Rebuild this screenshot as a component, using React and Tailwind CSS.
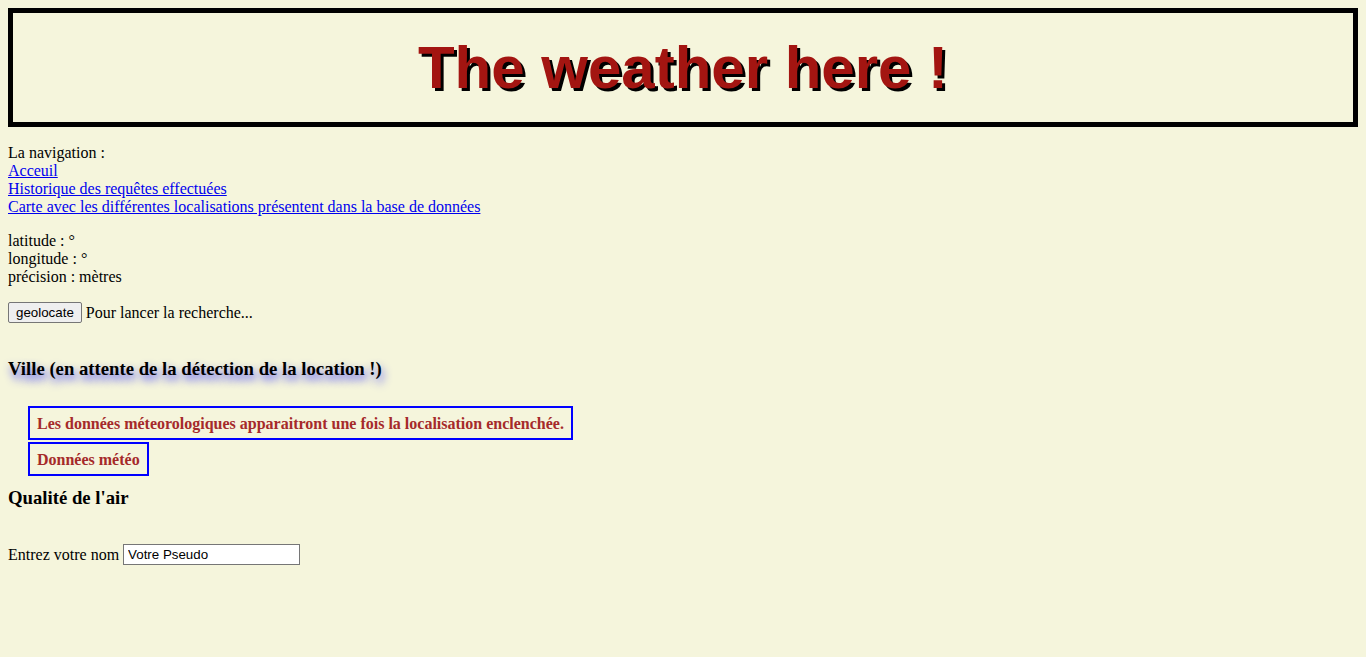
const NAV_LINKS = [
  'Acceuil',
  'Historique des requêtes effectuées',
  'Carte avec les différentes localisations présentent dans la base de données',
]

export default function App() {
  return (
    <div className="min-h-screen bg-[#f5f5dc] p-2 font-['Liberation_Serif',serif] text-[16px] leading-[18px] text-black">
      {/* Title */}
      <h1 className="border-[5px] border-black py-5 text-center font-['Liberation_Sans',Arial,sans-serif] text-[60px] font-bold leading-[69px] text-[#a31511] [text-shadow:3px_3px_0_#000]">
        The weather here !
      </h1>

      {/* Navigation */}
      <div className="mt-[17px] flex flex-col">
        <span>La navigation :</span>
        {NAV_LINKS.map((label) => (
          <a key={label} href="#" className="w-fit text-[#0000ee] underline">
            {label}
          </a>
        ))}
      </div>

      {/* Coordinates */}
      <div className="mt-4 flex flex-col">
        <span>latitude : °</span>
        <span>longitude : °</span>
        <span>précision : mètres</span>
      </div>

      <div className="mt-4 flex items-center gap-[4px]">
        <button className="h-[21px] rounded-[2px] border border-[#767676] bg-[#efefef] px-[7px] font-['Liberation_Sans',Arial,sans-serif] text-[13.33px] leading-[17px]">
          geolocate
        </button>
        <span>Pour lancer la recherche...</span>
      </div>

      <h3 className="mt-[35px] text-[18.72px] font-bold leading-[22px] [text-shadow:2px_5px_9px_rgba(40,40,255,0.8)]">
        Ville (en attente de la détection de la location !)
      </h3>

      {/* Weather boxes */}
      <div className="ml-5 mt-[26px] flex flex-col gap-[2px]">
        <div className="w-fit border-2 border-[#0000ff] px-[7px] pt-[7px] pb-[5px] font-bold text-[16px] text-[#a52a2a]">
          Les données méteorologiques apparaitront une fois la localisation enclenchée.
        </div>
        <div className="w-fit border-2 border-[#0000ff] px-[7px] pt-[7px] pb-[5px] font-bold text-[16px] text-[#a52a2a]">
          Données météo
        </div>
      </div>

      <h3 className="mt-[11px] text-[18.72px] font-bold leading-[22px]">Qualité de l'air</h3>

      <div className="mt-[35px] flex items-center gap-[4px]">
        <span>Entrez votre nom</span>
        <input
          type="text"
          defaultValue="Votre Pseudo"
          className="h-[21px] w-[177px] border border-[#767676] bg-white px-[4px] font-['Liberation_Sans',Arial,sans-serif] text-[13.33px] text-black"
        />
      </div>
    </div>
  )
}
